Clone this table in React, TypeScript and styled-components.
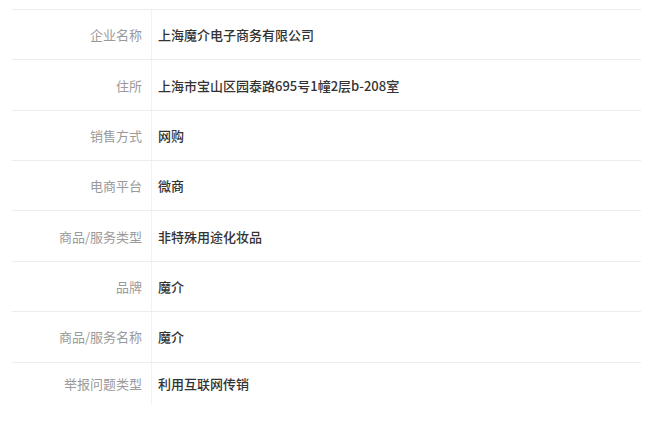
import React from "react";
import styled, { createGlobalStyle } from "styled-components";

const Global = createGlobalStyle`
  html, body { margin: 0; padding: 0; background: #ffffff; }
  body { font-family: "Noto Sans CJK SC", "Noto Sans", sans-serif; }
`;

const Page = styled.div`
  padding: 9px 25px 0 12px;
`;

const Table = styled.div`
  border-top: 1px solid #ececec;
  display: flex;
  flex-direction: column;
`;

const Row = styled.div<{ $last?: boolean }>`
  display: grid;
  grid-template-columns: 140px 1fr;
  height: ${(p) => (p.$last ? "42px" : "50.36px")};
  box-sizing: border-box;
  border-bottom: ${(p) => (p.$last ? "none" : "1px solid #ececec")};
`;

const Label = styled.div`
  display: flex;
  align-items: center;
  justify-content: flex-end;
  padding-right: 9px;
  font-size: 13px;
  color: #9a9a9a;
  border-right: 1px solid #f2f2f2;
`;

const Value = styled.div`
  display: flex;
  align-items: center;
  padding-left: 6px;
  font-size: 13px;
  font-weight: 500;
  color: #333333;
`;

const rows: [string, string][] = [
  ["企业名称", "上海魔介电子商务有限公司"],
  ["住所", "上海市宝山区园泰路695号1幢2层b-208室"],
  ["销售方式", "网购"],
  ["电商平台", "微商"],
  ["商品/服务类型", "非特殊用途化妆品"],
  ["品牌", "魔介"],
  ["商品/服务名称", "魔介"],
  ["举报问题类型", "利用互联网传销"],
];

export default function App() {
  return (
    <>
      <Global />
      <Page>
        <Table>
          {rows.map(([k, v], i) => (
            <Row key={k} $last={i === rows.length - 1}>
              <Label>{k}</Label>
              <Value>{v}</Value>
            </Row>
          ))}
        </Table>
      </Page>
    </>
  );
}
